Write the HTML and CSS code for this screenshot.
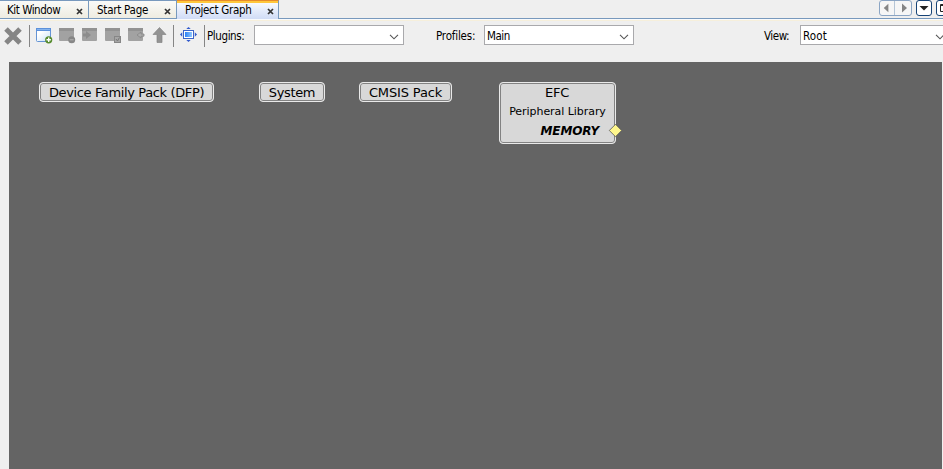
FILE: index.html
```
<!DOCTYPE html>
<html lang="en">
<head>
<meta charset="utf-8">
<title>Project Graph</title>
<link rel="stylesheet" href="styles.css">
</head>
<body>
<div class="tabbar">
  <div class="tab tab-kit"><span>Kit Window</span><svg class="close" width="7" height="7" viewBox="0 0 7 7"><path d="M1 1L6 6M6 1L1 6"/></svg></div>
  <div class="tab tab-start"><span>Start Page</span><svg class="close" width="7" height="7" viewBox="0 0 7 7"><path d="M1 1L6 6M6 1L1 6"/></svg></div>
  <div class="tab tab-graph active"><span>Project Graph</span><svg class="close" width="7" height="7" viewBox="0 0 7 7"><path d="M1 1L6 6M6 1L1 6"/></svg></div>
  <div class="controls">
    <div class="pager">
      <svg width="15" height="14" viewBox="0 0 15 14"><path fill="#858585" d="M9 2.5V11.5L4 7z"/></svg>
      <svg width="16" height="14" viewBox="0 0 16 14"><path fill="#858585" d="M7 2.5V11.5L12 7z"/></svg>
    </div>
    <div class="ctl"><svg width="14" height="14" viewBox="0 0 14 14"><path fill="#222" d="M2.5 5H11.5L7 9.5z"/></svg></div>
    <div class="ctl"><svg width="14" height="14" viewBox="0 0 14 14"><path fill="none" stroke="#222" d="M3.5 3.5H11V10.5H3.5zM3.5 4.5H11"/></svg></div>
  </div>
</div>
<div class="toolbar">
  <svg class="delete" width="20" height="20" viewBox="0 0 20 20"><path d="M3 3L17 17M17 3L3 17" fill="none" stroke="#858585" stroke-width="5"/></svg>
  <i class="sep"></i>
  <div class="tools">
    <svg width="17" height="16" viewBox="0 0 17 16"><defs><linearGradient id="win" x2="1" y2="1"><stop offset=".3" stop-color="#fff"/><stop offset="1" stop-color="#c5e0f8"/></linearGradient></defs><rect x=".5" y=".5" width="14" height="13" rx="1" fill="url(#win)" stroke="#6594d4"/><path d="M0 0h15v3H0z" fill="#5c91db"/><path d="M1 1.5h13" stroke="#86b4ee"/><circle cx="12.7" cy="11.8" r="3.6" fill="#568b2e"/><path d="M10.5 11.8h4.4M12.7 9.6v4.4" stroke="#fff" stroke-width="1.4"/></svg>
    <svg width="17" height="16" viewBox="0 0 17 16"><rect width="15" height="13" rx="1" fill="#a2a2a2"/><path d="M0 0h15v3H0z" fill="#929292"/><circle cx="12.7" cy="11.8" r="3.5" fill="#868686"/><path d="M10.7 11.8h4" stroke="#b2b2b2"/></svg>
    <svg width="17" height="16" viewBox="0 0 17 16"><rect width="15" height="13" rx="1" fill="#a2a2a2"/><path d="M0 0h15v3H0z" fill="#929292"/><path d="M1 5.5h3V3l5 4-5 4V8.5H1z" fill="#8c8c8c"/></svg>
    <svg width="17" height="16" viewBox="0 0 17 16"><rect width="15" height="13" rx="1" fill="#a2a2a2"/><path d="M0 0h15v3H0z" fill="#929292"/><rect x="9.5" y="8.5" width="6" height="6" fill="#a5a5a5" stroke="#868686"/><path d="M11 11l1.5 2 2-3.5" fill="none" stroke="#777"/></svg>
    <svg width="17" height="16" viewBox="0 0 17 16"><rect width="15" height="13" rx="1" fill="#a2a2a2"/><path d="M0 0h15v3H0z" fill="#929292"/><path d="M13 4L9 7l4 3V8.2h3V6h-3z" fill="#aaa" stroke="#878787" stroke-width=".8"/></svg>
    <svg width="17" height="16" viewBox="0 0 17 16"><path d="M8.5 -.5L15 6.5H11V14.5H6V6.5H2z" fill="#939393" stroke="#858585" stroke-width=".7" stroke-linejoin="round"/></svg>
  </div>
  <i class="sep"></i>
  <svg class="fit" width="17" height="16" viewBox="0 0 17 16"><defs><linearGradient id="blue"><stop stop-color="#2d82f6"/><stop offset="1" stop-color="#91c8ff"/></linearGradient></defs><rect x="3.5" y="3.5" width="10" height="8" fill="#fff" stroke="#3c64c8"/><rect x="5" y="5" width="7" height="5" fill="url(#blue)"/><path d="M8.5 0L10.7 2H6.3zM8.5 15L10.7 13H6.3zM0 7.5L2.2 5.3V9.7zM17 7.5L14.8 5.3V9.7z" fill="#3159cc"/></svg>
  <i class="sep"></i>
  <label class="label plugins">Plugins:</label>
  <div class="combo"><span></span><svg class="arrow" width="10" height="6" viewBox="0 0 10 6"><path d="M1 .8L5 4.8 9 .8"/></svg></div>
  <label class="label profiles">Profiles:</label>
  <div class="combo"><span class="main">Main</span><svg class="arrow" width="10" height="6" viewBox="0 0 10 6"><path d="M1 .8L5 4.8 9 .8"/></svg></div>
  <label class="label view">View:</label>
  <div class="combo"><span class="root">Root</span><svg class="arrow" width="10" height="6" viewBox="0 0 10 6"><path d="M1 .8L5 4.8 9 .8"/></svg></div>
</div>
<main class="graph">
  <div class="node dfp">Device Family Pack (DFP)</div>
  <div class="node system">System</div>
  <div class="node cmsis">CMSIS Pack</div>
  <div class="node efc">
    <div class="title">EFC</div>
    <div class="subtitle">Peripheral Library</div>
    <div class="capability">MEMORY</div>
    <svg class="port" width="14" height="14" viewBox="0 0 14 14"><path d="M7.5 .3L13.7 6.5 7.5 12.7 1.3 6.5z" fill="#fff78c" stroke="#555" stroke-width=".8"/></svg>
  </div>
</main>
</body>
</html>
```
FILE: styles.css
```
* { box-sizing: border-box; }
body {
  margin: 0;
  height: 469px;
  overflow: hidden;
  display: flex;
  flex-direction: column;
  background: #efefef;
  color: #000;
  font: 11.5px/14px "DejaVu Sans Condensed", "DejaVu Sans", sans-serif;
  font-stretch: condensed;
}
svg { display: block; flex: none; }
.tabbar {
  height: 21px;
  flex: none;
  display: flex;
  border-bottom: 1px solid #f6efdb;
  box-shadow: inset 0 -1px #f8fafc, inset 0 -2px #7899bd;
  background: #efefef;
}
.tab {
  height: 19px;
  flex: none;
  display: flex;
  justify-content: space-between;
  padding: 2px 5px 0 8px;
  border-top: 1px solid #7899bd;
  border-right: 1px solid #7899bd;
  border-bottom: 1px solid #7899bd;
  background: linear-gradient(#fafaf8, #eeece1);
  white-space: nowrap;
}
.tab-kit { width: 89px; padding-left: 7px; letter-spacing: -.46px; }
.tab-start { width: 88px; letter-spacing: -.24px; }
.tab-graph { width: 102px; letter-spacing: -.3px; }
.tab.active {
  padding-top: 2px;
  padding-right: 4px;
  border-top: 1px solid #e68b2c;
  border-bottom: 0;
  background: linear-gradient(#ffc73c 2px, #f7f9fe 2px, #d0dcf6);
}
.close { margin-top: 5px; fill: none; stroke: #333; stroke-width: 1.7; }
.controls {
  flex: none;
  display: flex;
  gap: 4px;
  margin-left: 600px;
}
.pager, .ctl { height: 16px; border: 1px solid #8ba5c4; border-radius: 3px; background: #f6f6f6; }
.pager { width: 33px; display: flex; flex: none; }
.pager svg:first-child { border-right: 1px solid #b5c5d6; }
.ctl { width: 16px; flex: none; border-color: #174477; background: #fff; }
.toolbar {
  height: 41px;
  flex: none;
  display: flex;
  align-items: flex-start;
  padding: 4px 0 0 3px;
}
.delete { margin: 1px 6px 0 0; }
.sep { width: 1px; height: 22px; flex: none; background: #858585; }
.tools { display: flex; gap: 6px; padding: 3px 6px 0; flex: none; width: 143px; }
.tools svg { overflow: visible; }
.fit { margin: 2px 7px 0 6px; }
.label { flex: none; height: 20px; line-height: 22px; white-space: nowrap; }
.plugins { width: 47px; margin-left: 2px; letter-spacing: -.4px; }
.profiles { width: 48px; margin-left: 32px; letter-spacing: -.2px; }
.view { width: 36px; margin-left: 130px; letter-spacing: -.45px; }
.combo {
  width: 150px;
  height: 20px;
  flex: none;
  display: flex;
  justify-content: space-between;
  align-items: center;
  padding: 0 4px 0 2px;
  border: 1px solid #a9a9ac;
  background: #fff;
}
.main, .root { padding-top: 1px; }
.main { letter-spacing: -.5px; }
.root { letter-spacing: .15px; }
.arrow { margin-top: 3px; fill: none; stroke: #555; stroke-width: 1.1; }
.graph {
  position: relative;
  height: 407px;
  width: 933px;
  margin-left: 9px;
  background: #646464;
  font-family: "DejaVu Sans", sans-serif;
  font-stretch: normal;
}
.node {
  position: absolute;
  top: 20px;
  height: 20px;
  border: 1px solid #e9e9e9;
  border-radius: 4px;
  box-shadow: inset 0 0 0 1px #828282;
  background: #d8d8d8;
  font-size: 13px;
  line-height: 19px;
  text-align: center;
  white-space: nowrap;
}
.dfp { left: 30px; width: 175px; letter-spacing: -.37px; }
.system { left: 250px; width: 66px; letter-spacing: -.35px; }
.cmsis { left: 350px; width: 93px; letter-spacing: -.15px; }
.efc { left: 490px; width: 117px; height: 62px; }
.title { letter-spacing: -.2px; padding-right: 1px; }
.subtitle { font-size: 11px; line-height: 19px; letter-spacing: -.05px; }
.capability { padding: 1px 16px 0 0; font-size: 12px; letter-spacing: -.1px; font-weight: bold; font-style: italic; text-align: right; }
.port { position: absolute; right: -7px; top: 41px; }
```
